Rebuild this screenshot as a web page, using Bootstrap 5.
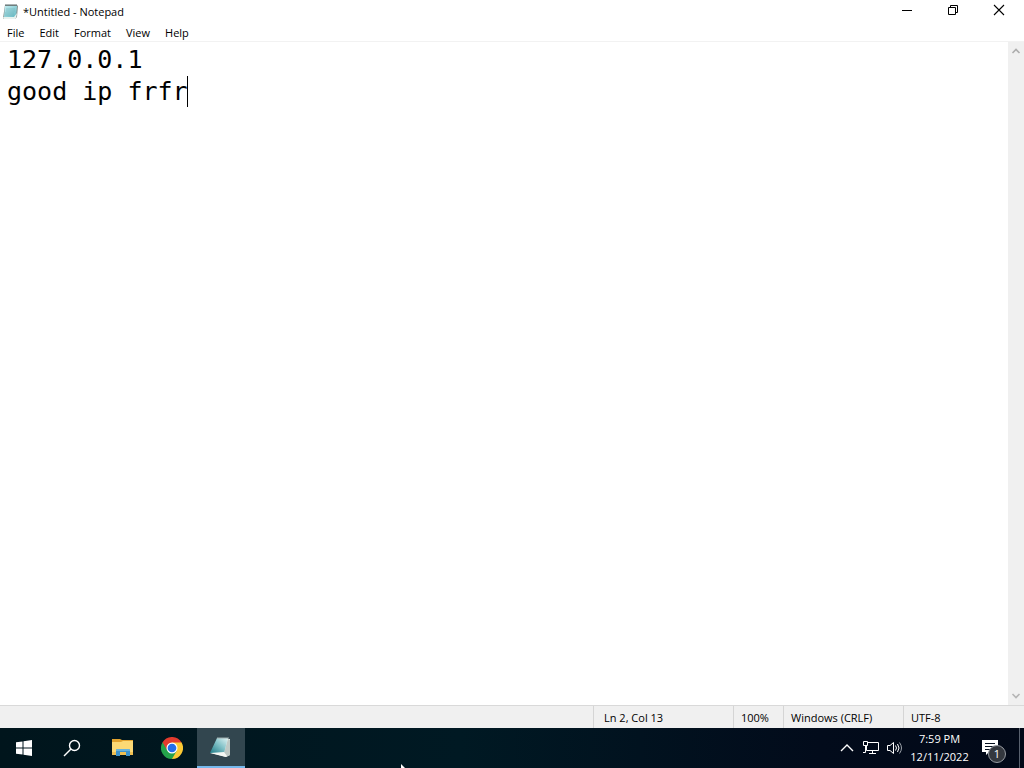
<!DOCTYPE html>
<html lang="en">
<head>
<meta charset="utf-8">
<meta name="viewport" content="width=device-width, initial-scale=1">
<title>*Untitled - Notepad</title>
<link rel="stylesheet" href="https://cdn.jsdelivr.net/npm/bootstrap@5.3.0/dist/css/bootstrap.min.css">
<style>
  body { font-family: "Open Sans", "Noto Sans", sans-serif; font-size: 11px; line-height: 16px; color: #000; background: #fff; }
  button { font: inherit; color: inherit; background: none; border: 0; padding: 0; }
  svg { display: block; flex: none; }
  .title-bar { height: 24px; padding: 0 2px; gap: 4px; }
  .caption-btn { width: 46px; height: 20px; }
  .menu-bar { height: 18px; border-bottom: 1px solid #f2f2f2; }
  .menu-bar button { padding: 1px 8px 0 7px; }
  .editor { font: 25px/32px "DejaVu Sans Mono", monospace; color: #000; padding: 2px 7px; resize: none; outline: 0; }
  .caret { left: 187px; top: 34px; width: 1px; height: 31px; background: #000; }
  .scroll-track { width: 16px; background: #f0f0f0; }
  .scroll-track button { width: 16px; height: 18px; }
  .status-bar { height: 23px; background: #f0f0f0; border-top: 1px solid #d9d9d9; padding-right: 1px; }
  .status-cell { border-left: 1px solid #d5d5d5; padding: 1px 0 0 7px; }
  .status-pos { width: 140px; padding-left: 10px; }
  .status-zoom { width: 50px; }
  .status-wide { width: 120px; }
  .task-bar { height: 40px; color: #fff; background: linear-gradient(90deg, #00151c, #001923 45%, #020b1b 80%, #020918); }
  .task-btn { width: 48px; height: 40px; }
  .apps { gap: 1px; margin-left: 3px; }
  .task-btn.current { background: #32464f; border-bottom: 2px solid #76b9ed; }
  .tray-btn { width: 24px; height: 40px; }
  .clock { width: 65px; line-height: 18px; text-align: center; white-space: nowrap; }
  .notices { width: 47px; height: 40px; }
  .notice-icon { left: 9px; top: 11px; }
  .desk-peek { width: 5px; border-left: 1px solid #59616e; }
  .count { left: 16px; top: 17px; width: 18px; height: 18px; border: 1px solid #979ba2; border-radius: 50%; background: #34383f; line-height: 16px; }
  .pointer { left: 401px; bottom: 0; }
</style>
</head>
<body class="vh-100 overflow-hidden d-flex flex-column position-relative">
<svg width="0" height="0" class="position-absolute" aria-hidden="true">
  <defs>
    <linearGradient id="cover" x1="1" y1="0" x2="0" y2="1"><stop offset="0" stop-color="#e2f3f3"/><stop offset=".45" stop-color="#86c4ca"/><stop offset="1" stop-color="#1f7c88"/></linearGradient>
    <linearGradient id="leaf" x1="0" y1="0" x2="1" y2="1"><stop offset="0" stop-color="#c3edf1"/><stop offset="1" stop-color="#63b7c1"/></linearGradient>
  </defs>
</svg>

<header class="title-bar d-flex align-items-center">
  <svg width="17" height="18" viewBox="0 0 17 18" aria-hidden="true">
    <path d="M3 2h12l1 1-1 11-2 2H2l-1-1z" fill="#87918f"/>
    <path d="M3 3h12l-1 11H2z" fill="url(#leaf)"/>
    <path d="m1 14 11 0 3-4-1 5-1 1H2z" fill="#e7f2ef"/>
    <path d="M4 6h9M4 8h9M3 10h9M3 12h9" stroke="#71b1bb" stroke-width=".6"/>
    <path d="M4 1v2M6 1v2M8 1v2M10 1v2M12 1v2M14 1v2" stroke="#596b6d"/>
  </svg>
  <span class="me-auto">*Untitled - Notepad</span>
  <div class="d-flex align-self-start">
    <button class="caption-btn d-flex align-items-center justify-content-center" aria-label="Minimize"><svg width="10" height="12"><path d="M0 6.500h10" stroke="#000"/></svg></button>
    <button class="caption-btn d-flex align-items-center justify-content-center" aria-label="Restore"><svg width="12" height="12" fill="none" stroke="#000"><path d="M1.500 3.500h7v7h-7zM3.500 3.500v-2h7v7h-2"/></svg></button>
    <button class="caption-btn d-flex align-items-center justify-content-center" aria-label="Close"><svg width="12" height="12"><path d="m1 1 10 10M11 1 1 11" stroke="#000" stroke-width="1.100"/></svg></button>
  </div>
</header>

<nav class="menu-bar d-flex align-items-start" aria-label="Menu">
  <button>File</button><button>Edit</button><button>Format</button><button>View</button><button>Help</button>
</nav>

<main class="flex-grow-1 d-flex position-relative">
  <textarea class="editor flex-grow-1 border-0 overflow-hidden" aria-label="Text editor" spellcheck="false">127.0.0.1
good ip frfr</textarea>
  <span class="caret position-absolute"></span>
  <div class="scroll-track d-flex flex-column justify-content-between">
    <button class="d-flex align-items-center justify-content-center" aria-label="Scroll up"><svg width="10" height="8" fill="none" stroke="#adadad" stroke-width="1.600"><path d="m1.500 6 3.500-3.500L8.500 6"/></svg></button>
    <button class="d-flex align-items-center justify-content-center" aria-label="Scroll down"><svg width="10" height="8" fill="none" stroke="#b5b5b5" stroke-width="1.600"><path d="M1.500 2 5 5.500 8.500 2"/></svg></button>
  </div>
</main>

<footer class="status-bar d-flex justify-content-end">
  <div class="status-cell status-pos d-flex align-items-center">Ln 2, Col 13</div>
  <div class="status-cell status-zoom d-flex align-items-center">100%</div>
  <div class="status-cell status-wide d-flex align-items-center">Windows (CRLF)</div>
  <div class="status-cell status-wide d-flex align-items-center">UTF-8</div>
</footer>

<div class="task-bar d-flex">
  <button class="task-btn d-flex align-items-center justify-content-center" aria-label="Start"><svg width="16" height="16" fill="#fff"><path d="m0 2.300 6.500-.9v6.100H0zM7.500 1.200 16 0v7.500H7.500zM0 8.500h6.500v6.100L0 13.700zM7.500 8.500H16V16l-8.500-1.200z"/></svg></button>
  <button class="task-btn d-flex align-items-center justify-content-center" aria-label="Search"><svg width="18" height="18" fill="none" stroke="#fff" stroke-width="1.400"><circle cx="11.500" cy="6.500" r="5"/><path d="m8 10-7 7"/></svg></button>
  <div class="apps d-flex">
    <button class="task-btn d-flex align-items-center justify-content-center" aria-label="File Explorer"><svg width="22" height="18" viewBox="0 0 22 18">
      <path d="M0 0h8l2 1h11v4H0z" fill="#e2a32f"/><path d="M0 3h9l2-1h10v14H0z" fill="#fcd975"/><path d="M0 13h21v3H0z" fill="#f0c052"/>
      <path d="M4 17v-6l1-1h12l1 1v6h-4v-4H8v4z" fill="#3d93cc"/><path d="M4 12v-1l1-1h12l1 1v1z" fill="#68b3dc"/></svg></button>
    <button class="task-btn d-flex align-items-center justify-content-center" aria-label="Chrome"><svg width="22" height="22" viewBox="0 0 48 48">
      <path d="M24 24 3.200 12A24 24 0 0 1 44.800 12z" fill="#e33b2e"/><path d="M24 24 44.800 12A24 24 0 0 1 24 48z" fill="#fcc934"/><path d="M24 24v24A24 24 0 0 1 3.200 12z" fill="#24a34b"/>
      <path d="M24 12h20.800L34.400 30z" fill="#fcc934"/><path d="M34.400 30 24 48 13.600 30z" fill="#24a34b"/><path d="M13.600 30 3.200 12 24 12z" fill="#e33b2e"/>
      <path d="M13.600 30 3.200 12l-1 2 11 18z" fill="#24a34b"/>
      <circle cx="24" cy="24" r="12" fill="#fff"/><circle cx="24" cy="24" r="9.500" fill="#256eeb"/></svg></button>
    <button class="task-btn current d-flex align-items-center justify-content-center" aria-label="Notepad"><svg width="24" height="24" viewBox="0 0 24 24">
      <path d="m9 3 12 1v16l-4 2-15-4z" fill="#e4ebe7"/><path d="m19 4 2 1v15l-4 2-2-4z" fill="#bfc9c5"/>
      <path d="M8 3h11l-4 15H1z" fill="url(#cover)"/><path d="m1 18 14-1 3 4-1 1z" fill="#f5f8f4"/>
      <path d="M9 2v2m2-2v2m2-2v2m2-2v2m2-2v2m2-2v2" stroke="#9cacad"/></svg></button>
  </div>
  <div class="d-flex ms-auto">
    <button class="tray-btn d-flex align-items-center justify-content-center" aria-label="Show hidden icons"><svg width="14" height="8" fill="none" stroke="#fff" stroke-width="1.400"><path d="m1 7 6-6 6 6"/></svg></button>
    <button class="tray-btn d-flex align-items-center justify-content-center" aria-label="Network"><svg width="18" height="16" fill="none" stroke="#fff"><path d="M5.500 2.500h11v8h-12V6M10.500 10.500v3M7 13.500h7M1.500 1.500h4v4h-4zM3.500 5.500v7H1"/></svg></button>
    <button class="tray-btn d-flex align-items-center justify-content-center" aria-label="Volume"><svg width="18" height="16" fill="none" stroke="#fff"><path d="M1.500 5.500H4l3.500-3v11L4 10.500H1.500zM9.500 5.500q2 2.500 0 5M11.500 4q3 4 0 8"/><path d="M13.500 2.500q4 5.500 0 11" stroke="#9da3aa"/></svg></button>
    <button class="clock d-flex flex-column justify-content-center align-items-center"><span>7:59 PM</span><span>12/11/2022</span></button>
    <button class="notices position-relative" aria-label="Notifications">
      <svg width="18" height="17" class="notice-icon position-absolute"><path d="M1 1h16v12H8l-3 3v-3H1z" fill="#fff"/><path d="M4 4.500h10M4 7.500h10M4 10.500h6" stroke="#06101f"/></svg>
      <span class="count position-absolute">1</span>
    </button>
    <div class="desk-peek"></div>
  </div>
</div>
<svg class="pointer position-absolute" width="4" height="4" aria-hidden="true"><path d="M0 0v4h4z" fill="#fff"/></svg>
<script src="https://cdn.jsdelivr.net/npm/bootstrap@5.3.0/dist/js/bootstrap.bundle.min.js"></script>
</body>
</html>
